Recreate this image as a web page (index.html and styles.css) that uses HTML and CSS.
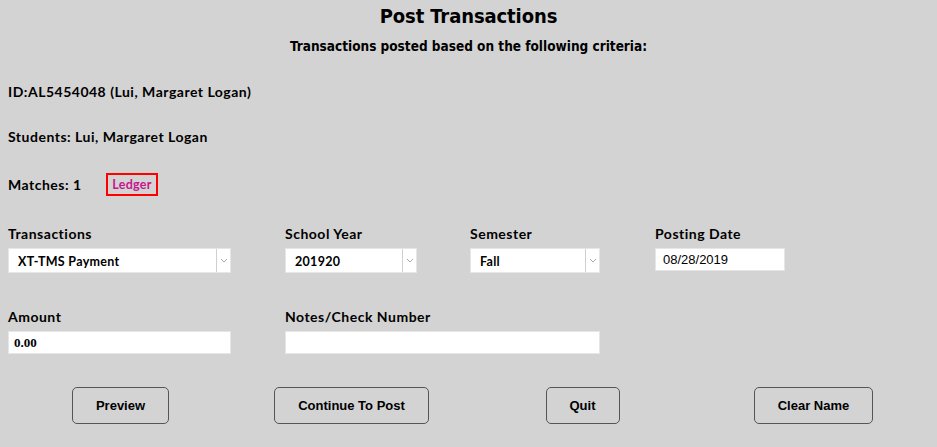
FILE: index.html
```html
<!DOCTYPE html>
<html>
<head>
<meta charset="utf-8">
<link rel="stylesheet" href="styles.css">
</head>
<body>
<div class="page">
  <h1 class="title">Post Transactions</h1>
  <p class="subtitle">Transactions posted based on the following criteria:</p>
  <p class="info info-id">ID:AL5454048 (Lui, Margaret Logan)</p>
  <p class="info info-students">Students: Lui, Margaret Logan</p>
  <div class="matches">
    <span class="info matches-text">Matches: 1</span>
    <span class="ledger">Ledger</span>
  </div>
  <div class="form-row row-top">
    <div class="field">
      <label class="lbl">Transactions</label>
      <div class="select sel-trans"><span class="sel-val">XT-TMS Payment</span><span class="sel-arrow"><svg width="8" height="5" viewBox="0 0 8 5"><path d="M1 1 L4 4 L7 1" fill="none" stroke="#aaa" stroke-width="1"/></svg></span></div>
    </div>
    <div class="field">
      <label class="lbl">School Year</label>
      <div class="select sel-year"><span class="sel-val">201920</span><span class="sel-arrow"><svg width="8" height="5" viewBox="0 0 8 5"><path d="M1 1 L4 4 L7 1" fill="none" stroke="#aaa" stroke-width="1"/></svg></span></div>
    </div>
    <div class="field">
      <label class="lbl">Semester</label>
      <div class="select sel-sem"><span class="sel-val">Fall</span><span class="sel-arrow"><svg width="8" height="5" viewBox="0 0 8 5"><path d="M1 1 L4 4 L7 1" fill="none" stroke="#aaa" stroke-width="1"/></svg></span></div>
    </div>
    <div class="field">
      <label class="lbl">Posting Date</label>
      <div class="input date">08/28/2019</div>
    </div>
  </div>
  <div class="form-row row-bottom">
    <div class="field">
      <label class="lbl">Amount</label>
      <div class="input amount">0.00</div>
    </div>
    <div class="field notes-field">
      <label class="lbl">Notes/Check Number</label>
      <div class="input notes"></div>
    </div>
  </div>
  <div class="buttons">
    <button class="btn">Preview</button>
    <button class="btn">Continue To Post</button>
    <button class="btn">Quit</button>
    <button class="btn">Clear Name</button>
  </div>
</div>
</body>
</html>
```
FILE: styles.css
```css
* { box-sizing: border-box; }
html, body { margin: 0; padding: 0; background: #d3d3d3; }
body { width: 937px; height: 447px; overflow: hidden; }
.page { padding: 0 8px; color: #000; font-family: "Lato", "DejaVu Sans", sans-serif; font-weight: 700; }
.title {
  margin: 4px 0 0; text-align: center;
  font-family: "DejaVu Sans Condensed", "DejaVu Sans", sans-serif;
  font-weight: 700; font-size: 20px; line-height: 24px;
  letter-spacing: -0.1px;
}
.subtitle {
  margin: 10px 0 0; text-align: center;
  font-family: "DejaVu Sans Condensed", "DejaVu Sans", sans-serif;
  font-weight: 700; font-size: 13.5px; line-height: 16px;
  letter-spacing: 0;
}
.info { margin: 0; font-size: 14px; line-height: 16px; letter-spacing: 0.5px; }
.info-id { margin-top: 30px; }
.info-students { margin-top: 29px; }
.matches { margin-top: 28px; display: flex; align-items: center; height: 23px; }
.matches-text { width: 98px; }
.ledger {
  border: 2px solid #ff0000; height: 23px; width: 52px;
  display: flex; align-items: center; justify-content: center;
  color: #c8158f; font-size: 12.5px; letter-spacing: 0.3px;
}
.form-row { display: grid; grid-template-columns: 277px 185px 185px auto; }
.row-top { margin-top: 30px; }
.row-bottom { margin-top: 36px; }
.field { display: flex; flex-direction: column; gap: 6px; }
.notes-field { grid-column: 2 / 4; }
.lbl { font-size: 14px; line-height: 16px; letter-spacing: 0.5px; }
.select { display: flex; height: 25px; background: #fff; border: 1px solid #e6e6e6; }
.sel-val { flex: 1; display: flex; align-items: center; padding-left: 9px; padding-top: 2px; font-size: 12.5px; letter-spacing: 0.3px; }
.sel-arrow { width: 14px; border-left: 1px solid #d0d0d0; display: flex; align-items: center; justify-content: center; }
.sel-trans { width: 223px; }
.sel-year { width: 132px; }
.sel-sem { width: 130px; }
.input { height: 23px; background: #fff; border: 1px solid #e6e6e6; display: flex; align-items: center; }
.date { width: 130px; padding-left: 7px; font-family: "Liberation Sans", Arial, sans-serif; font-weight: 400; font-size: 13px; }
.amount { width: 223px; padding-left: 5px; font-family: "Liberation Serif", serif; font-weight: 700; font-size: 13px; }
.notes { width: 315px; }
.buttons { margin-top: 33px; margin-left: -3px; display: grid; grid-template-columns: repeat(4, 231px); justify-items: center; }
.btn {
  height: 37px; padding: 0 23px; background: #d3d3d3;
  border: 1px solid #555; border-radius: 5px;
  font-family: "Liberation Sans", Arial, sans-serif; font-weight: 700; font-size: 13px; color: #000;
}
```
